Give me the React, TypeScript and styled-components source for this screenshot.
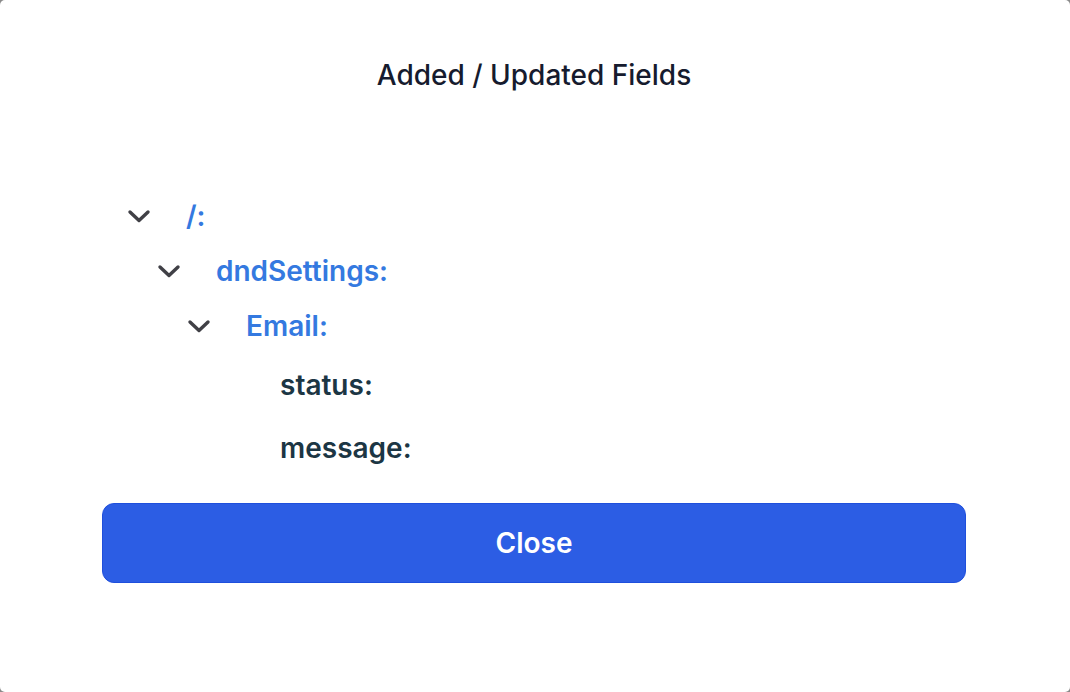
import React from "react";
import styled, { createGlobalStyle } from "styled-components";

const Global = createGlobalStyle`
  html, body { margin: 0; padding: 0; background: #8a8a8a; }
  body { font-family: Inter, "Noto Sans", sans-serif; }
`;

const Modal = styled.div`
  width: 1070px;
  height: 692px;
  box-sizing: border-box;
  background: #ffffff;
  border-radius: 5px;
  display: flex;
  flex-direction: column;
  padding: 58px 104px 0 102px;
`;

const Title = styled.h2`
  margin: 0;
  text-align: center;
  font-size: 28px;
  font-weight: 500;
  color: #161b2e;
  line-height: 34px;
`;

const Tree = styled.ul`
  list-style: none;
  margin: 0;
  padding: 0;
  margin-top: 96px;
  display: flex;
  flex-direction: column;
`;

const Row = styled.li<{ $level: number; $leaf?: boolean }>`
  display: flex;
  align-items: center;
  height: ${(p) => (p.$leaf ? 63 : 55)}px;
  padding-left: ${(p) => 24 + p.$level * 30}px;
`;

const Chevron = styled.span`
  width: 26px;
  height: 26px;
  display: flex;
  align-items: center;
  justify-content: center;
  margin-right: 34px;
  color: #404046;
`;

const Label = styled.span<{ $leaf?: boolean }>`
  font-size: 28px;
  font-weight: 600;
  color: ${(p) => (p.$leaf ? "#1c3644" : "#3479e0")};
  margin-left: ${(p) => (p.$leaf ? "34px" : "0")};
`;

const CloseButton = styled.button`
  margin-top: 24px;
  height: 80px;
  width: 864px;
  border-radius: 12px;
  border: 1.5px solid #1f4fdc;
  background: #2c5de4;
  color: #ffffff;
  font-family: Inter, sans-serif;
  font-size: 28px;
  font-weight: 600;
  cursor: pointer;
`;

const ChevronIcon = () => (
  <svg width="24" height="24" viewBox="0 0 24 24" fill="none">
    <path d="M3 8l9 8.5L21 8" stroke="currentColor" strokeWidth="3.4" strokeLinecap="round" strokeLinejoin="round" />
  </svg>
);

type Node = { label: string; level: number; leaf?: boolean };

const nodes: Node[] = [
  { label: "/:", level: 0 },
  { label: "dndSettings:", level: 1 },
  { label: "Email:", level: 2 },
  { label: "status:", level: 3, leaf: true },
  { label: "message:", level: 3, leaf: true },
];

export default function App() {
  return (
    <>
      <Global />
      <Modal>
        <Title>Added / Updated Fields</Title>
        <Tree>
          {nodes.map((n) => (
            <Row key={n.label} $level={n.leaf ? 2 : n.level} $leaf={n.leaf}>
              <Chevron>{!n.leaf && <ChevronIcon />}</Chevron>
              <Label $leaf={n.leaf}>{n.label}</Label>
            </Row>
          ))}
        </Tree>
        <CloseButton>Close</CloseButton>
      </Modal>
    </>
  );
}
